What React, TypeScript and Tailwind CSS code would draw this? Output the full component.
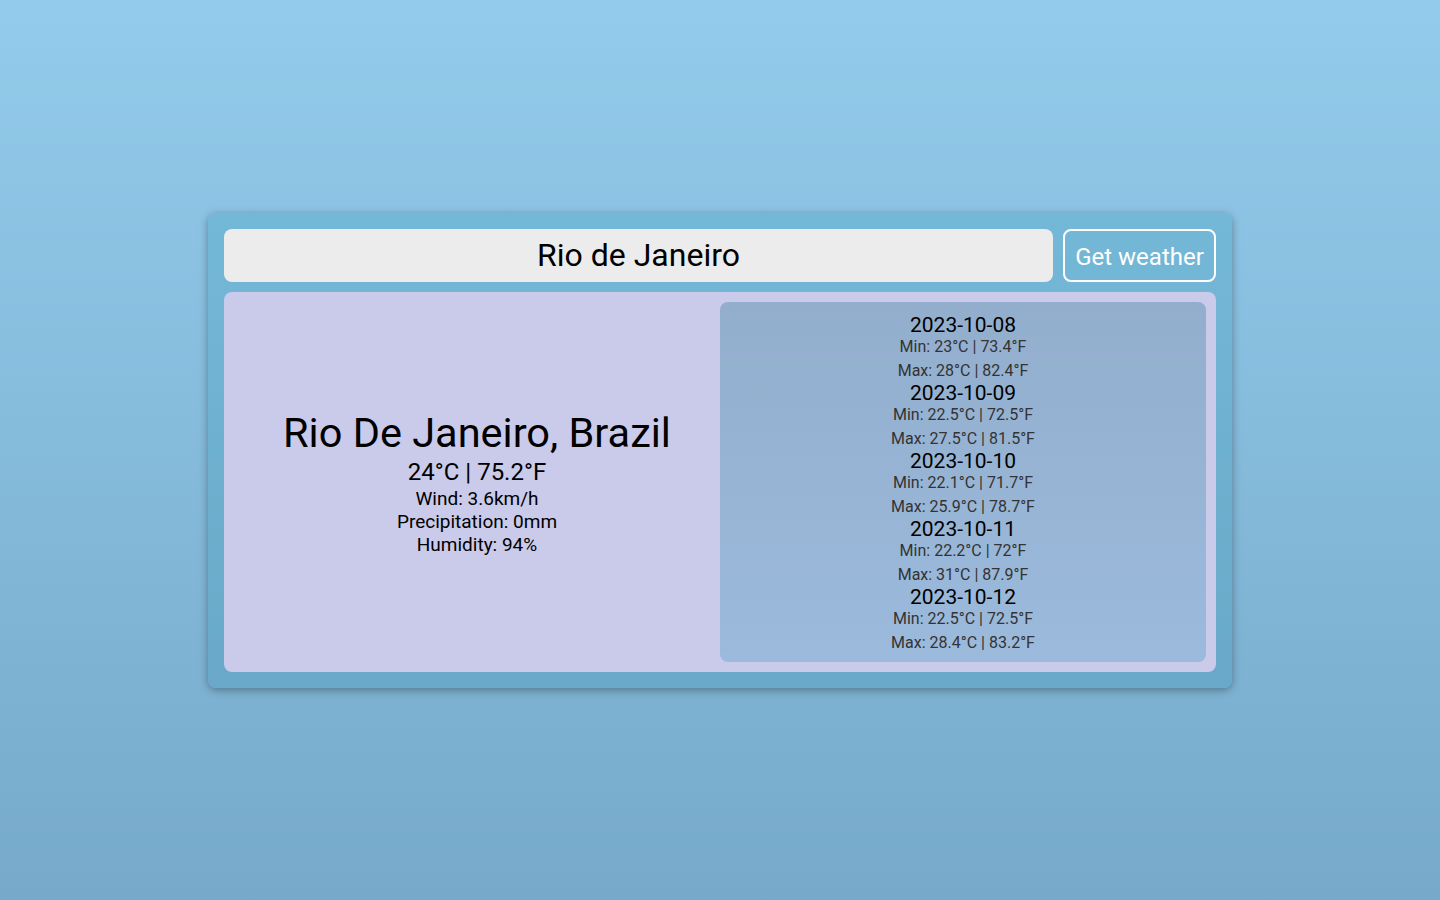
import React, { useState } from "react";

type Day = { date: string; min: string; max: string };

const forecast: Day[] = [
  { date: "2023-10-08", min: "23°C | 73.4°F", max: "28°C | 82.4°F" },
  { date: "2023-10-09", min: "22.5°C | 72.5°F", max: "27.5°C | 81.5°F" },
  { date: "2023-10-10", min: "22.1°C | 71.7°F", max: "25.9°C | 78.7°F" },
  { date: "2023-10-11", min: "22.2°C | 72°F", max: "31°C | 87.9°F" },
  { date: "2023-10-12", min: "22.5°C | 72.5°F", max: "28.4°C | 83.2°F" },
];

const App: React.FC = () => {
  const [city, setCity] = useState("Rio de Janeiro");

  return (
    <div
      className="min-h-screen w-full flex items-center justify-center bg-gradient-to-b from-[#93cbec] to-[#77aaca]"
      style={{ fontFamily: "Roboto, 'Liberation Sans', sans-serif" }}
    >
      <div className="w-[1024px] rounded-lg p-4 bg-gradient-to-b from-[#74b8d7] to-[#69a8c8] shadow-[0_2px_8px_rgba(0,0,0,0.35)]">
        <div className="flex gap-[10px]">
          <input
            value={city}
            onChange={(e) => setCity(e.target.value)}
            className="flex-1 h-[53px] rounded-lg bg-[#ececec] text-center text-[32px] text-black outline-none"
          />
          <button className="w-[153px] h-[53px] pt-1 rounded-lg border-2 border-white text-white text-[24px]">
            Get weather
          </button>
        </div>

        <div className="mt-[10px] rounded-lg bg-[#cacaeb] p-[10px] grid grid-cols-2">
          <div className="flex flex-col items-center justify-center text-black">
            <h1 className="text-[41.5px] leading-[50px]">Rio De Janeiro, Brazil</h1>
            <p className="text-[24px] leading-[29px]">24°C | 75.2°F</p>
            <p className="text-[19px] leading-[23px]">Wind: 3.6km/h</p>
            <p className="text-[19px] leading-[23px]">Precipitation: 0mm</p>
            <p className="text-[19px] leading-[23px]">Humidity: 94%</p>
          </div>

          <div className="rounded-lg bg-gradient-to-b from-[#93aecd] to-[#9bbadc] pt-[12px] pb-[8px] flex flex-col items-center">
            {forecast.map((d) => (
              <div key={d.date} className="flex flex-col items-center h-[68px]">
                <span className="text-[21px] leading-[23px] text-black">{d.date}</span>
                <span className="-mt-px text-[16px] leading-[21px] text-[#333]">Min: {d.min}</span>
                <span className="mt-[3px] text-[16px] leading-[21px] text-[#333]">Max: {d.max}</span>
              </div>
            ))}
          </div>
        </div>
      </div>
    </div>
  );
};

export default App;
